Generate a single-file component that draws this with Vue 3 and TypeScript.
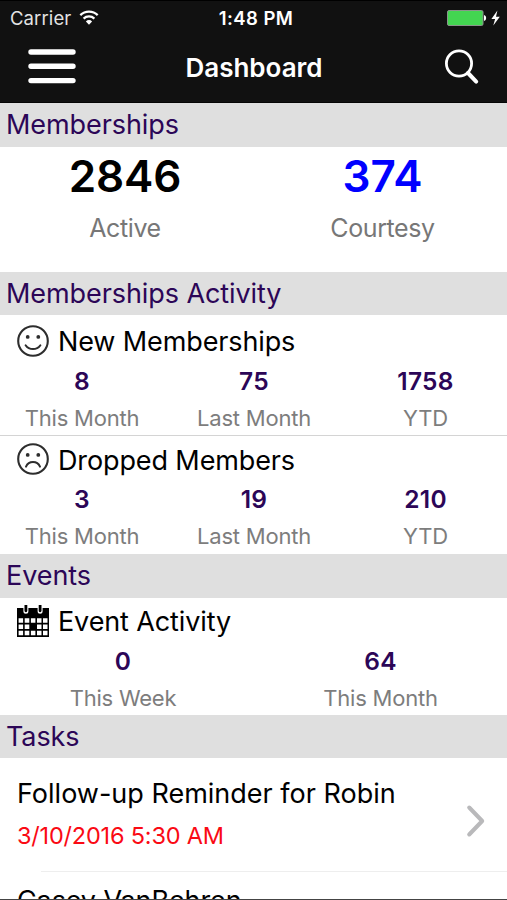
<script setup lang="ts">
interface Stat {
  value: string
  label: string
}

interface Activity {
  title: string
  icon: 'smile' | 'frown'
  stats: Stat[]
}

const totals = [
  { value: '2846', label: 'Active', tone: 'black' },
  { value: '374', label: 'Courtesy', tone: 'blue' },
]

const memberActivity: Activity[] = [
  {
    title: 'New Memberships',
    icon: 'smile',
    stats: [
      { value: '8', label: 'This Month' },
      { value: '75', label: 'Last Month' },
      { value: '1758', label: 'YTD' },
    ],
  },
  {
    title: 'Dropped Members',
    icon: 'frown',
    stats: [
      { value: '3', label: 'This Month' },
      { value: '19', label: 'Last Month' },
      { value: '210', label: 'YTD' },
    ],
  },
]

const eventStats: Stat[] = [
  { value: '0', label: 'This Week' },
  { value: '64', label: 'This Month' },
]
</script>

<template>
  <div class="screen">
    <header class="top">
      <div class="status">
        <div class="carrier">
          <span>Carrier</span>
          <svg class="wifi" width="20" height="15" viewBox="0 0 20 15">
            <path d="M1.3 5.2a12.6 12.6 0 0 1 17.4 0" fill="none" stroke="#fff" stroke-width="2.3" />
            <path d="M4.6 8.6a7.9 7.9 0 0 1 10.8 0" fill="none" stroke="#fff" stroke-width="2.2" />
            <path d="M10 14.8 6.9 11.4a4.4 4.4 0 0 1 6.2 0Z" fill="#fff" />
          </svg>
        </div>
        <span class="clock">1:48 PM</span>
        <svg class="battery" width="54" height="18" viewBox="0 0 54 18">
          <rect x=".5" y="1.5" width="35.5" height="15" rx="1.5" fill="#43d551" stroke="#8a948b" />
          <path d="M37 6q2.2 .4 2.2 3t-2.2 3Z" fill="#fff" />
          <path d="M50.4 1.6 44.4 10h3.7L46.3 16.6l6.5-8.9h-3.8Z" fill="#fff" />
        </svg>
      </div>
      <nav class="bar">
        <svg class="menu" width="48" height="36" viewBox="0 0 48 36">
          <path d="M3 4h42M3 18.3h42M3 32.6h42" stroke="#fff" stroke-width="5.4" stroke-linecap="round" />
        </svg>
        <h1>Dashboard</h1>
        <svg class="search" width="36" height="36" viewBox="0 0 36 36" fill="none" stroke="#fff">
          <circle cx="15" cy="14.5" r="12.6" stroke-width="2.8" />
          <path d="m24 24 8.2 8.6" stroke-width="4" stroke-linecap="round" />
        </svg>
      </nav>
    </header>

    <h2>Memberships</h2>
    <section class="totals">
      <div v-for="t in totals" :key="t.label" class="total">
        <strong :class="t.tone">{{ t.value }}</strong>
        <span>{{ t.label }}</span>
      </div>
    </section>

    <h2>Memberships Activity</h2>
    <section v-for="a in memberActivity" :key="a.title" class="activity members">
      <div class="heading">
        <svg width="32" height="32" viewBox="0 0 32 32" fill="none" stroke="#2d2d2d">
          <circle cx="16" cy="16" r="14.8" stroke-width="2.1" />
          <circle cx="10.7" cy="11.9" r="1.9" fill="#2d2d2d" stroke="none" />
          <circle cx="21.3" cy="11.9" r="1.9" fill="#2d2d2d" stroke="none" />
          <path v-if="a.icon === 'smile'" d="M8.6 20.2c3.6 5.2 11.2 5.2 14.8 0" stroke-width="2" stroke-linecap="round" />
          <path v-else d="M9 23.6c2.8-6 11.2-6 14 0" stroke-width="2" stroke-linecap="round" />
        </svg>
        <h3>{{ a.title }}</h3>
      </div>
      <div class="stats three">
        <div v-for="s in a.stats" :key="s.label" class="stat">
          <strong>{{ s.value }}</strong>
          <span>{{ s.label }}</span>
        </div>
      </div>
    </section>

    <h2>Events</h2>
    <section class="activity events">
      <div class="heading">
        <svg width="32" height="32" viewBox="0 0 32 32">
          <path d="M0 3h32v29H0Z" fill="#000" />
          <path d="M6.4 0h5v6.2a2.5 2.5 0 0 1-5 0ZM20.6 0h5v6.2a2.5 2.5 0 0 1-5 0Z" fill="#fff" />
          <path d="M7.5 0h2.8v5.8a1.4 1.4 0 0 1-2.8 0ZM21.7 0h2.8v5.8a1.4 1.4 0 0 1-2.8 0Z" fill="#000" />
          <g fill="#fff">
            <path d="M1.6 13.2h4.5v4.6H1.6zM7.7 13.2h4.6v4.6H7.7zM13.9 13.2h4.5v4.6h-4.5zM20 13.2h4.5v4.6H20zM26 13.2h4.5v4.6H26z" />
            <path d="M1.6 19.4h4.5v4.6H1.6zM7.7 19.4h4.6v4.6H7.7zM20 19.4h4.5v4.6H20zM26 19.4h4.5v4.6H26z" />
            <path d="M1.6 25.7h4.5v4.6H1.6zM7.7 25.7h4.6v4.6H7.7zM13.9 25.7h4.5v4.6h-4.5zM20 25.7h4.5v4.6H20zM26 25.7h4.5v4.6H26z" />
          </g>
        </svg>
        <h3>Event Activity</h3>
      </div>
      <div class="stats two">
        <div v-for="s in eventStats" :key="s.label" class="stat">
          <strong>{{ s.value }}</strong>
          <span>{{ s.label }}</span>
        </div>
      </div>
    </section>

    <h2>Tasks</h2>
    <section class="task">
      <div>
        <h3>Follow-up Reminder for Robin</h3>
        <time>3/10/2016 5:30 AM</time>
      </div>
      <svg width="20" height="34" viewBox="0 0 20 34">
        <path d="m3.2 3.5 13 13.5-13 13.5" fill="none" stroke="#b9b9bb" stroke-width="4" stroke-linecap="round" stroke-linejoin="round" />
      </svg>
    </section>
    <section class="next">
      <h3>Casey VanBehren</h3>
    </section>
  </div>
</template>

<style>
body {
  background: #fff;
}
</style>

<style scoped>
.screen {
  width: 507px;
  height: 900px;
  box-sizing: border-box;
  overflow: hidden;
  border-bottom: 1px solid #444;
  background: #fff;
  color: #000;
  font-family: Inter, 'Liberation Sans', sans-serif;
}

h1,
h2,
h3 {
  margin: 0;
  font-weight: 400;
  white-space: nowrap;
}

.top {
  height: 103px;
  box-sizing: border-box;
  border-top: 1px solid #000;
  border-bottom: 1px solid #050505;
  background: #111;
  color: #fff;
}

.status {
  display: grid;
  grid-template-columns: 1fr auto 1fr;
  align-items: center;
  height: 34px;
  padding: 0 6px 0 10px;
  font-size: 18.5px;
}

.carrier {
  display: flex;
  align-items: center;
  gap: 8px;
  color: #e4e4e4;
  letter-spacing: 0.1px;
}

.wifi {
  margin-top: -2px;
}

.clock {
  margin-left: 1px;
  font-weight: 600;
  letter-spacing: 0.45px;
}

.battery {
  justify-self: end;
}

.bar {
  display: grid;
  grid-template-columns: 1fr auto 1fr;
  align-items: center;
  height: 64px;
  padding: 0 27px 0 28px;
}

.menu {
  margin-top: -2px;
}

.search {
  justify-self: end;
}

h1 {
  font-size: 26px;
  font-weight: 600;
}

h2 {
  height: 43.5px;
  padding-left: 6px;
  background: #dfdfdf;
  color: #2c0657;
  font-size: 27px;
  letter-spacing: -0.08px;
  line-height: 43px;
}

.totals {
  display: grid;
  grid-template-columns: 250px 265px;
  height: 125px;
}

.total {
  display: flex;
  flex-direction: column;
  align-items: center;
}

.total strong {
  height: 60px;
  font-size: 44px;
  font-weight: 600;
  letter-spacing: -0.1px;
  line-height: 59px;
}

.total span {
  color: #777;
  font-size: 25px;
  letter-spacing: -0.4px;
  line-height: 43px;
}

.black {
  color: #000;
}

.blue {
  color: #00f;
}

.members {
  height: 120px;
  box-sizing: border-box;
  padding-top: 2.5px;
}

.members + .members {
  height: 119px;
  padding-top: 0;
  border-top: 1px solid #d4d4d4;
}

.events {
  height: 117px;
}

.heading {
  display: flex;
  align-items: center;
  gap: 9.5px;
  height: 46px;
  padding-left: 16.5px;
}

h3 {
  font-size: 27px;
  letter-spacing: -0.12px;
}

.heading h3 {
  padding-top: 3px;
  line-height: 40px;
}

.stats {
  display: grid;
}

.three {
  grid-template-columns: 164px 180px 163px;
}

.two {
  grid-template-columns: 246px 269px;
}

.stat {
  display: flex;
  flex-direction: column;
  align-items: center;
}

.stat strong {
  color: #2c0657;
  font-size: 24.5px;
  font-weight: 600;
  letter-spacing: 0.3px;
  line-height: 34px;
}

.stat span {
  color: #7d7d7d;
  font-size: 22px;
  letter-spacing: -0.22px;
  line-height: 41px;
}

.task {
  display: flex;
  align-items: center;
  justify-content: space-between;
  height: 113px;
  padding: 0 21px 0 17px;
}

.task > svg {
  margin-top: 13px;
}

.task h3 {
  letter-spacing: 0;
  line-height: 42px;
}

.task time {
  display: block;
  color: #fa0a14;
  font-size: 23.5px;
  letter-spacing: -0.2px;
  line-height: 42px;
}

.next {
  margin-left: 41px;
  border-top: 1px solid #eee;
}

.next h3 {
  margin-left: -24px;
  line-height: 57px;
}
</style>
